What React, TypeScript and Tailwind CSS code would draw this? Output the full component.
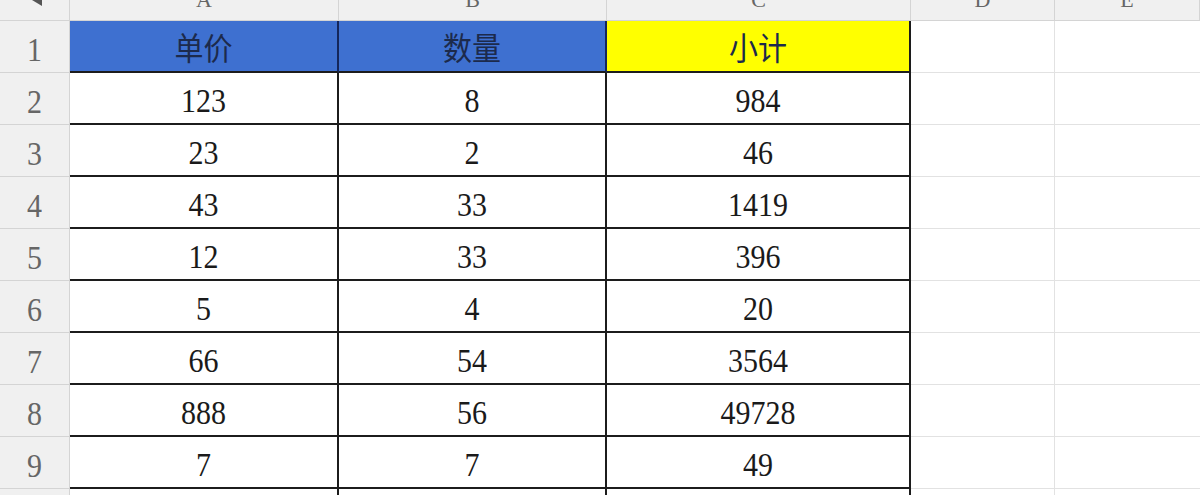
import React from 'react';

// 表格数据
const header = ['单价', '数量', '小计'];
const rows = [
  ['123', '8', '984'],
  ['23', '2', '46'],
  ['43', '33', '1419'],
  ['12', '33', '396'],
  ['5', '4', '20'],
  ['66', '54', '3564'],
  ['888', '56', '49728'],
  ['7', '7', '49'],
  ['', '', ''],
];

const cols = ['A', 'B', 'C', 'D', 'E'];
const gridCols = 'grid grid-cols-[70px_269px_268px_304px_144px_1fr]';
const num = "font-['Liberation_Serif',serif] text-[30px] leading-none inline-block scale-y-[1.1] mt-[6px]";

const App: React.FC = () => {
  return (
    <div className="w-[1200px] h-[495px] overflow-hidden bg-white font-['Noto_Sans_CJK_SC',sans-serif]">
      {/* 列标题 */}
      <div className={`${gridCols} h-[21px] bg-[#f0f0f0]`}>
        <div className="relative border-r border-b border-[#d4d4d4] overflow-hidden">
          <div className="absolute left-[32px] top-0 w-0 h-0 border-l-[10px] border-l-transparent border-t-[6px] border-t-[#555]" />
        </div>
        {cols.map((c) => (
          <div key={c} className="flex justify-center items-end overflow-hidden border-r border-b border-[#d4d4d4]">
            <span className="font-['Liberation_Serif',serif] text-[22px] leading-none text-[#666] mb-[9px]">{c}</span>
          </div>
        ))}
      </div>

      {/* 第1行 */}
      <div className={`${gridCols} h-[52px]`}>
        <div className="flex items-center justify-center bg-[#f0f0f0] border-r border-b border-[#d4d4d4]">
          <span className={`${num} text-[#666]`}>1</span>
        </div>
        {header.map((h, i) => (
          <div
            key={h}
            className={`flex items-center justify-center border-b-2 border-r-2 border-b-[#1c1c1c] ${i === 2 ? 'bg-[#ffff00] border-r-[#1c1c1c]' : 'bg-[#3e70d0] border-r-[#14265a]'}`}
          >
            <span className="text-[29px] leading-none text-[#1c2a4c] scale-y-[1.08] inline-block">{h}</span>
          </div>
        ))}
        <div className="border-r border-b border-[#e2e2e2]" />
        <div className="border-b border-[#e2e2e2]" />
      </div>

      {/* 数据行 */}
      {rows.map((r, idx) => (
        <div key={idx} className={`${gridCols} h-[52px]`}>
          <div className="flex items-center justify-center bg-[#f0f0f0] border-r border-b border-[#d4d4d4]">
            <span className={`${num} text-[#666]`}>{idx + 2}</span>
          </div>
          {r.map((v, i) => (
            <div key={i} className="flex items-center justify-center bg-white border-b-2 border-r-2 border-[#1c1c1c]">
              <span className={`${num} text-[#1a1a1a]`}>{v}</span>
            </div>
          ))}
          <div className="border-r border-b border-[#e2e2e2]" />
          <div className="border-b border-[#e2e2e2]" />
        </div>
      ))}
    </div>
  );
};

export default App;
